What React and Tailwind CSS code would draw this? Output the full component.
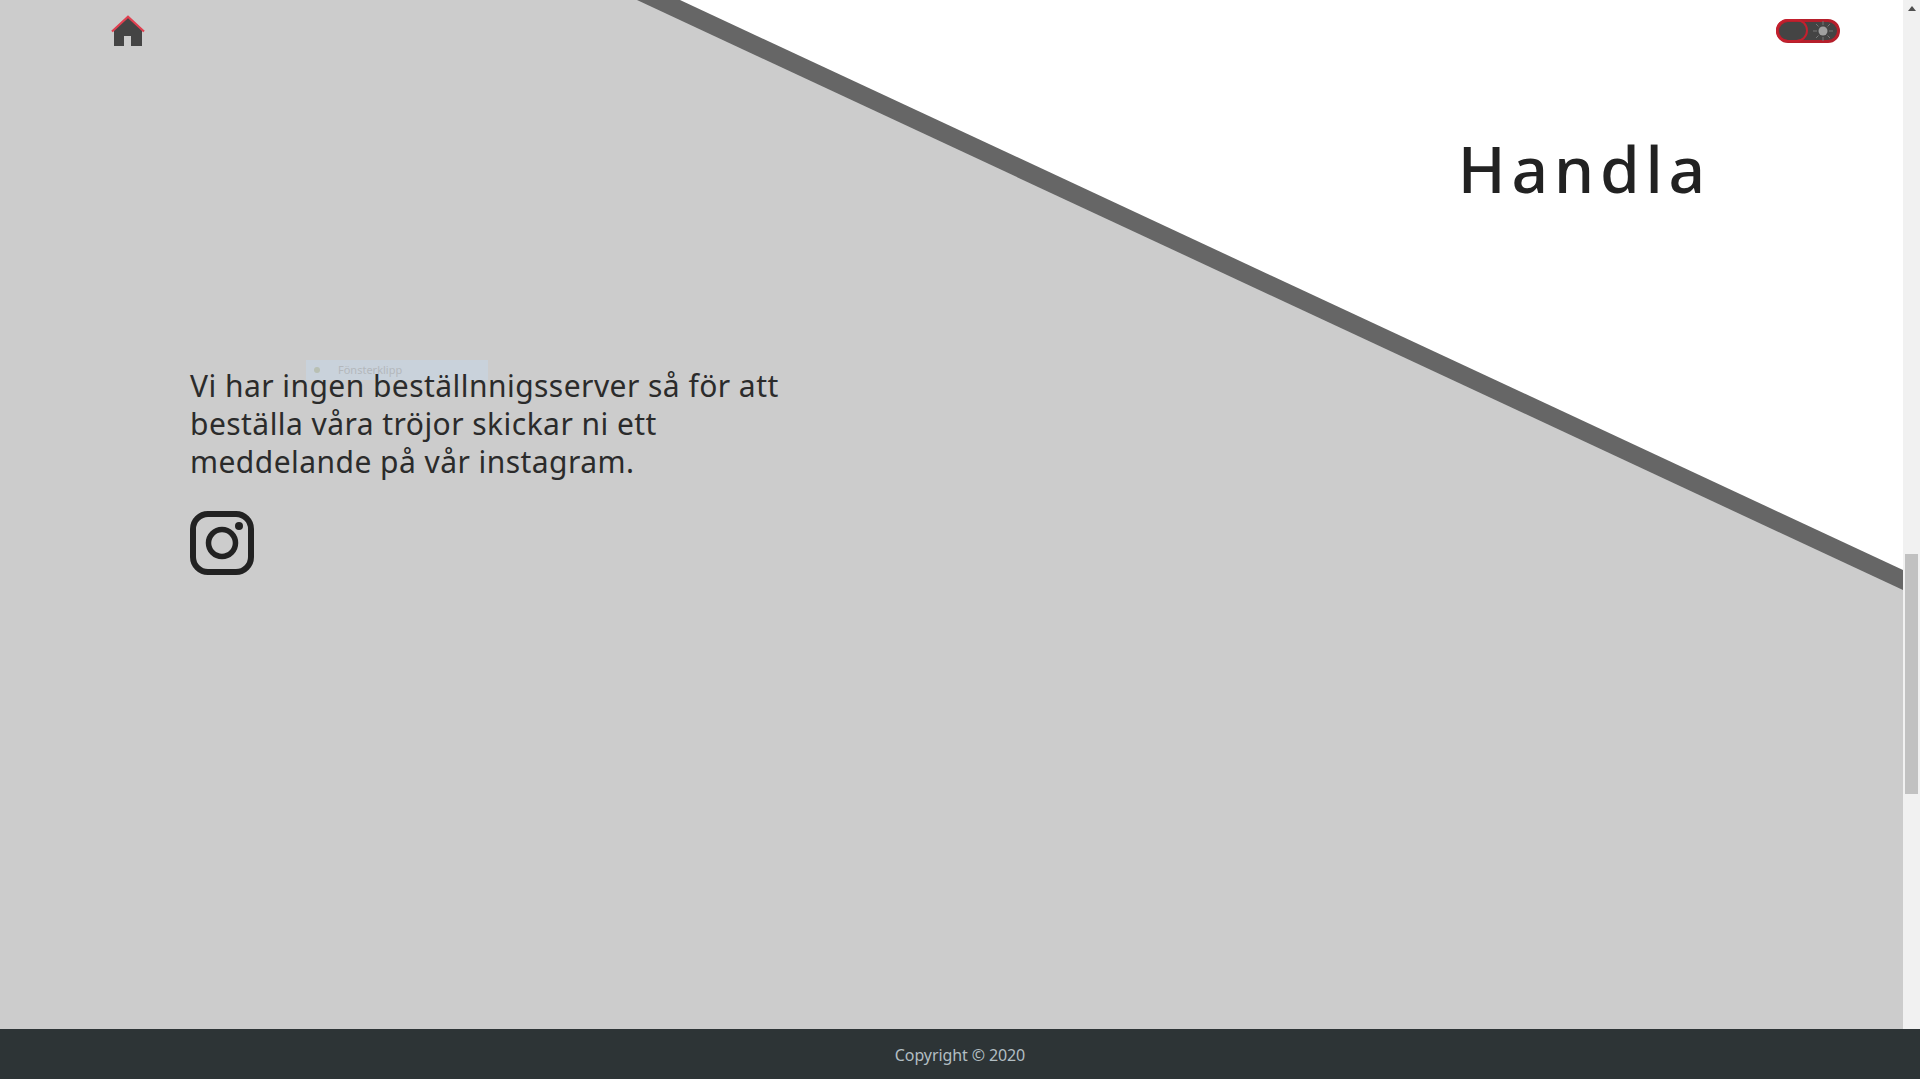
const HomeIcon = () => (
    <svg width="38" height="32" viewBox="0 0 38 32" className="block">
        <path d="M5 14 L19 2 L33 14 V31 H22 V21 H15 V31 H5 Z" fill="#444444" />
        <path d="M3 16.5 L19 1.7 L35 16.5" fill="none" stroke="#e04050" strokeWidth="2.2" />
    </svg>
);

const InstagramIcon = () => (
    <svg width="64" height="64" viewBox="0 0 64 64" className="block">
        <rect x="3" y="3" width="58" height="58" rx="15" fill="none" stroke="#222222" strokeWidth="6" />
        <circle cx="32" cy="32" r="13.5" fill="none" stroke="#222222" strokeWidth="5.5" />
        <circle cx="49" cy="15" r="4" fill="#222222" />
    </svg>
);

const SunIcon = () => (
    <svg width="22" height="22" viewBox="0 0 22 22" className="block">
        <circle cx="11" cy="11" r="4.5" fill="#a0a0a0" />
        <path d="M11 1v4M11 17v4M1 11h4M17 11h4M4 4l2.5 2.5M15.5 15.5L18 18M4 18l2.5-2.5M15.5 6.5L18 4" stroke="#777777" strokeWidth="1" />
    </svg>
);

const Toggle = () => (
    <div className="relative flex h-6 w-16 items-center justify-end rounded-full border-[3px] border-[#b51f2b] bg-[#444444] pr-[3px]">
        <div className="absolute -left-[3px] -top-[3px] h-[23px] w-8 rounded-full border-2 border-[#c4202e]" />
        <SunIcon />
    </div>
);

const Scrollbar = () => (
    <div className="flex w-[17px] shrink-0 flex-col items-center bg-[#f1f1f1]">
        <div className="mt-[6px] h-0 w-0 border-x-[4px] border-b-[5px] border-x-transparent border-b-[#505050]" />
        <div className="mt-[543px] h-[240px] w-[13px] bg-[#c1c1c1]" />
    </div>
);

export default function App() {
    return (
        <div className="flex h-[1079px] flex-col overflow-hidden bg-white font-['Noto_Sans',sans-serif] text-[#222222]">
            <div className="flex min-h-0 flex-1">
                <main className="relative flex-1 overflow-hidden">
                    {/* diagonal background */}
                    <div className="absolute inset-0 bg-[#666666] [clip-path:polygon(0_0,680px_0,1903px_570px,1903px_1029px,0_1029px)]" />
                    <div className="absolute inset-0 bg-[#cccccc] [clip-path:polygon(0_0,637px_0,1903px_590px,1903px_1029px,0_1029px)]" />

                    <div className="relative">
                        <header className="flex items-start justify-between pl-[109px] pr-[63px]">
                            <div className="pt-[15px]"><HomeIcon /></div>
                            <div className="pt-[19px]"><Toggle /></div>
                        </header>

                        <div className="flex justify-end pr-[192px] pt-[78px]">
                            <h1 className="text-[64px] leading-[88px] font-medium tracking-[5.85px]">Handla</h1>
                        </div>

                        <section className="pl-[190px] pt-[154px]">
                            <div className="relative w-[620px]">
                                <div className="absolute left-[116px] -top-[7px] flex h-5 w-[182px] items-center gap-[18px] bg-[#c9d2db] pl-[8px] text-[11px] text-[#b4b8bc]">
                                    <span className="h-1.5 w-1.5 rounded-full bg-[#b9c0b4]" />
                                    <span>Fönsterklipp</span>
                                </div>
                                <p className="relative text-[30px] leading-[38px] tracking-[0.45px] text-[#2b2b2b]">
                                    Vi har ingen beställnnigsserver så för att<br />
                                    beställa våra tröjor skickar ni ett<br />
                                    meddelande på vår instagram.
                                </p>
                            </div>
                            <a href="#" className="mt-[30px] block w-16"><InstagramIcon /></a>
                        </section>
                    </div>
                </main>
                <Scrollbar />
            </div>

            <footer className="flex h-[50px] shrink-0 items-center justify-center bg-[#2d3436] pt-px text-base tracking-[-0.1px] text-[#b2bec3]">
                Copyright © 2020
            </footer>
        </div>
    );
}
